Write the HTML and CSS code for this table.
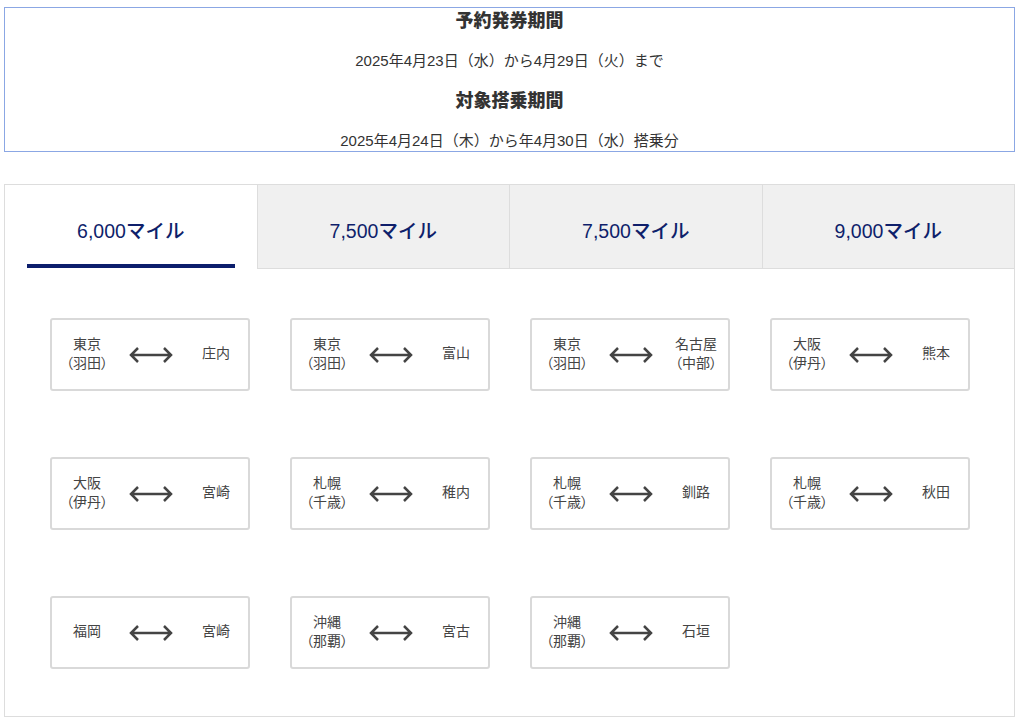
FILE: index.html
```html
<!DOCTYPE html>
<html lang="ja">
<head>
<meta charset="utf-8">
<title>特典航空券</title>
<link rel="stylesheet" href="styles.css">
</head>
<body>
<div class="page">
  <section class="period">
    <h2 class="period-title">予約発券期間</h2>
    <p class="period-date">2025年4月23日（水）から4月29日（火）まで</p>
    <h2 class="period-title">対象搭乗期間</h2>
    <p class="period-date">2025年4月24日（木）から年4月30日（水）搭乗分</p>
  </section>

  <section class="panel">
    <div class="tabs">
      <div class="tab active">6,000マイル</div>
      <div class="tab">7,500マイル</div>
      <div class="tab">7,500マイル</div>
      <div class="tab">9,000マイル</div>
    </div>
    <div class="routes">
      <div class="route"><div class="city">東京<br>（羽田）</div><svg class="arrow" viewBox="0 0 44 18"><path d="M2 9H42M9 2L2 9L9 16M35 2L42 9L35 16"/></svg><div class="city">庄内</div></div>
      <div class="route"><div class="city">東京<br>（羽田）</div><svg class="arrow" viewBox="0 0 44 18"><path d="M2 9H42M9 2L2 9L9 16M35 2L42 9L35 16"/></svg><div class="city">富山</div></div>
      <div class="route"><div class="city">東京<br>（羽田）</div><svg class="arrow" viewBox="0 0 44 18"><path d="M2 9H42M9 2L2 9L9 16M35 2L42 9L35 16"/></svg><div class="city">名古屋<br>（中部）</div></div>
      <div class="route"><div class="city">大阪<br>（伊丹）</div><svg class="arrow" viewBox="0 0 44 18"><path d="M2 9H42M9 2L2 9L9 16M35 2L42 9L35 16"/></svg><div class="city">熊本</div></div>
      <div class="route"><div class="city">大阪<br>（伊丹）</div><svg class="arrow" viewBox="0 0 44 18"><path d="M2 9H42M9 2L2 9L9 16M35 2L42 9L35 16"/></svg><div class="city">宮崎</div></div>
      <div class="route"><div class="city">札幌<br>（千歳）</div><svg class="arrow" viewBox="0 0 44 18"><path d="M2 9H42M9 2L2 9L9 16M35 2L42 9L35 16"/></svg><div class="city">稚内</div></div>
      <div class="route"><div class="city">札幌<br>（千歳）</div><svg class="arrow" viewBox="0 0 44 18"><path d="M2 9H42M9 2L2 9L9 16M35 2L42 9L35 16"/></svg><div class="city">釧路</div></div>
      <div class="route"><div class="city">札幌<br>（千歳）</div><svg class="arrow" viewBox="0 0 44 18"><path d="M2 9H42M9 2L2 9L9 16M35 2L42 9L35 16"/></svg><div class="city">秋田</div></div>
      <div class="route"><div class="city">福岡</div><svg class="arrow" viewBox="0 0 44 18"><path d="M2 9H42M9 2L2 9L9 16M35 2L42 9L35 16"/></svg><div class="city">宮崎</div></div>
      <div class="route"><div class="city">沖縄<br>（那覇）</div><svg class="arrow" viewBox="0 0 44 18"><path d="M2 9H42M9 2L2 9L9 16M35 2L42 9L35 16"/></svg><div class="city">宮古</div></div>
      <div class="route"><div class="city">沖縄<br>（那覇）</div><svg class="arrow" viewBox="0 0 44 18"><path d="M2 9H42M9 2L2 9L9 16M35 2L42 9L35 16"/></svg><div class="city">石垣</div></div>
    </div>
  </section>
</div>
</body>
</html>
```

FILE: styles.css
```css
* { box-sizing: border-box; }

html, body {
  margin: 0;
  padding: 0;
  background: #ffffff;
}

body {
  font-family: "Liberation Sans", "Noto Sans CJK JP", sans-serif;
  color: #333333;
}

.page {
  width: 1011px;
  margin-left: 4px;
  padding-top: 7px;
}

.period {
  border: 1px solid #8ba7e4;
  padding-top: 1px;
  display: flex;
  flex-direction: column;
  align-items: center;
  gap: 18px;
}

.period-title {
  margin: 0;
  font-size: 18px;
  line-height: 24px;
  font-weight: 900;
  color: #333333;
}

.period-date {
  margin: 0;
  font-size: 15px;
  line-height: 20px;
  color: #333333;
}

.panel {
  margin-top: 32px;
  border: 1px solid #dddddd;
}

.tabs {
  display: flex;
}

.tab {
  position: relative;
  flex: 1;
  height: 84px;
  padding-top: 6px;
  display: flex;
  align-items: center;
  justify-content: center;
  font-size: 19.5px;
  font-weight: 500;
  color: #0f1f6b;
  background: #f0f0f0;
  border-left: 1px solid #dddddd;
  border-bottom: 1px solid #dddddd;
}

.tab.active {
  background: #ffffff;
  border-left: none;
  border-bottom: 1px solid transparent;
}

.tab.active::after {
  content: "";
  position: absolute;
  left: 22px;
  right: 22px;
  bottom: 0;
  height: 4px;
  background: #0c1e6c;
}

.routes {
  display: grid;
  grid-template-columns: repeat(4, 200px);
  column-gap: 40px;
  row-gap: 66px;
  padding: 49px 43px 47px 45px;
}

.route {
  height: 73px;
  border: 2px solid #d9d9d9;
  border-radius: 3px;
  display: grid;
  grid-template-columns: 70px 58px 72px;
  align-items: center;
  justify-items: center;
  font-family: "Noto Sans CJK JP", sans-serif;
  font-feature-settings: "palt";
  font-size: 14px;
  line-height: 19px;
  color: #444444;
}

.city {
  text-align: center;
  margin-bottom: 4px;
}

.arrow {
  width: 44px;
  height: 18px;
  fill: none;
  stroke: #444444;
  stroke-width: 2.5;
}
```
